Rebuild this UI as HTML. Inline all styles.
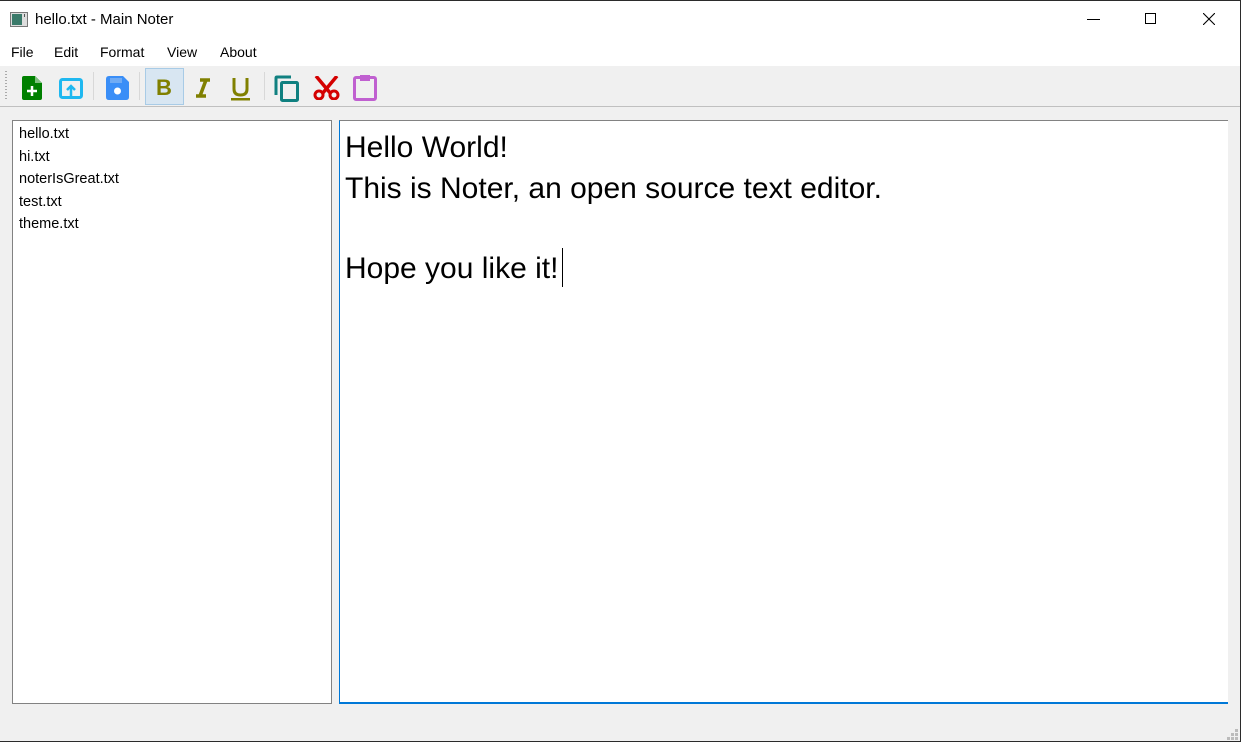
<!DOCTYPE html>
<html><head><style>
*{margin:0;padding:0;box-sizing:border-box}
body{width:1241px;height:742px;background:#f0f0f0;font-family:"Liberation Sans",sans-serif;position:relative;overflow:hidden;border-top:1px solid #2b2b2b;border-right:1px solid #2b2b2b;border-bottom:1px solid #2b2b2b}
.abs{position:absolute}
#title{left:0;top:0;width:1240px;height:38px;background:#fff}
#menu{left:0;top:38px;width:1240px;height:27px;background:#fff;font-size:14px}
#menu span{position:absolute;top:5px}
#tb{left:0;top:65px;width:1240px;height:41px;background:#f0f0f0;border-bottom:1px solid #c0c0c0}
.sep{position:absolute;top:6px;width:1px;height:28px;background:#d8d8d8}
#list{left:12px;top:119px;width:320px;height:584px;background:#fff;border:1px solid #828282;font-size:14.5px;color:#000}
#list div{position:absolute;left:6px}
#ed{left:339px;top:119px;width:889px;height:584px;background:#fff;border-top:1px solid #828282;border-left:1px solid #0078d7;border-bottom:2px solid #0078d7;font-size:30px;color:#000}
#ed div{position:absolute;left:5px;white-space:nowrap}
</style></head><body>
<div id="title" class="abs">
  <svg class="abs" style="left:10px;top:11px" width="18" height="15"><rect x="0.5" y="0.5" width="17" height="14" fill="#ddd" stroke="#777"/><rect x="2" y="2" width="10" height="11" fill="#3a7a6a"/><rect x="14" y="2" width="1" height="3" fill="#555"/></svg>
  <div class="abs" style="left:35px;top:10px;font-size:15px">hello.txt - Main Noter</div>
  <div class="abs" style="left:1087px;top:18px;width:13px;height:1px;background:#000"></div>
  <div class="abs" style="left:1145px;top:12px;width:11px;height:11px;border:1px solid #000"></div>
  <svg class="abs" style="left:1203px;top:12px" width="12" height="12"><path d="M0 0L12 12M12 0L0 12" stroke="#000" stroke-width="1.1"/></svg>
</div>
<div id="menu" class="abs">
  <span style="left:11px">File</span><span style="left:54px">Edit</span><span style="left:100px">Format</span><span style="left:167px">View</span><span style="left:220px">About</span>
</div>
<div id="tb" class="abs">
  <div class="abs" style="left:5px;top:5px;width:2px;height:30px;background:repeating-linear-gradient(#aaa 0 1px,transparent 1px 3px)"></div>
  <svg class="abs" style="left:22px;top:10px" width="22" height="24"><path d="M0 2Q0 0 2 0H13L20 7V22Q20 24 18 24H2Q0 24 0 22Z" fill="#008000"/><path d="M13 0V7H20" fill="#7fbf7f"/><path d="M10 10V20M5 15H15" stroke="#fff" stroke-width="2.5"/></svg>
  <svg class="abs" style="left:59px;top:12px" width="24" height="21"><rect x="1.5" y="1.5" width="21" height="18" rx="2" fill="none" stroke="#1fb8f0" stroke-width="3"/><path d="M12 18V9M8 12L12 8L16 12" stroke="#1fb8f0" stroke-width="2.5" fill="none"/></svg>
  <svg class="abs" style="left:106px;top:10px" width="23" height="24"><path d="M0 3Q0 0 3 0H17L23 6V21Q23 24 20 24H3Q0 24 0 21Z" fill="#3a8ef7"/><rect x="4" y="2" width="12" height="5" fill="#f0f0f0" opacity=".3"/><circle cx="11.5" cy="15" r="3.5" fill="#fff"/></svg>
  <div class="abs" style="left:145px;top:2px;width:39px;height:37px;background:#d8e6f2;border:1px solid #a8cbe6"></div>
  <div class="abs" style="left:156px;top:9px;font-size:22px;font-weight:bold;color:#808000">B</div>
  <svg class="abs" style="left:193px;top:12px" width="20" height="20"><path d="M7 2H17M3 18H13M13 2L7 18" stroke="#808000" stroke-width="3.5" fill="none"/></svg>
  <svg class="abs" style="left:230px;top:11px" width="21" height="24"><path d="M4 1V12Q4 18 10.5 18Q17 18 17 12V1" stroke="#808000" stroke-width="3" fill="none"/><rect x="1" y="21" width="19" height="2.5" fill="#808000"/></svg>
  <svg class="abs" style="left:274px;top:9px" width="26" height="27"><path d="M2 20V3Q2 2 3 2H17" stroke="#108080" stroke-width="3" fill="none"/><rect x="7.5" y="7.5" width="16" height="18" rx="1" stroke="#108080" stroke-width="3" fill="none"/></svg>
  <svg class="abs" style="left:313px;top:10px" width="27" height="24"><path d="M3 0L18 18M24 0L9 18" stroke="#d40000" stroke-width="3.5"/><circle cx="6" cy="19" r="4" fill="none" stroke="#d40000" stroke-width="3"/><circle cx="21" cy="19" r="4" fill="none" stroke="#d40000" stroke-width="3"/></svg>
  <svg class="abs" style="left:353px;top:7px" width="25" height="28"><rect x="1.5" y="4.5" width="21" height="22" rx="1.5" fill="none" stroke="#c060d0" stroke-width="3"/><rect x="7" y="2" width="10" height="6" fill="#c060d0"/></svg>
  <div class="sep" style="left:93px"></div><div class="sep" style="left:139px"></div><div class="sep" style="left:264px"></div>
</div>
<div id="list" class="abs">
  <div style="top:5px">hello.txt</div><div style="top:28px">hi.txt</div><div style="top:50px">noterIsGreat.txt</div><div style="top:73px">test.txt</div><div style="top:95px">theme.txt</div>
</div>
<div id="ed" class="abs">
  <div style="top:10px">Hello World!</div>
  <div style="top:51px">This is Noter, an open source text editor.</div>
  <div style="top:131px">Hope you like it!</div>
  <div style="left:222px;top:127px;width:1px;height:39px;background:#000"></div>
</div>
<svg class="abs" style="left:1227px;top:728px" width="11" height="11"><g fill="#bbb"><rect x="8" y="0" width="3" height="3"/><rect x="4" y="4" width="3" height="3"/><rect x="8" y="4" width="3" height="3"/><rect x="0" y="8" width="3" height="3"/><rect x="4" y="8" width="3" height="3"/><rect x="8" y="8" width="3" height="3"/></g></svg>
</body></html>
